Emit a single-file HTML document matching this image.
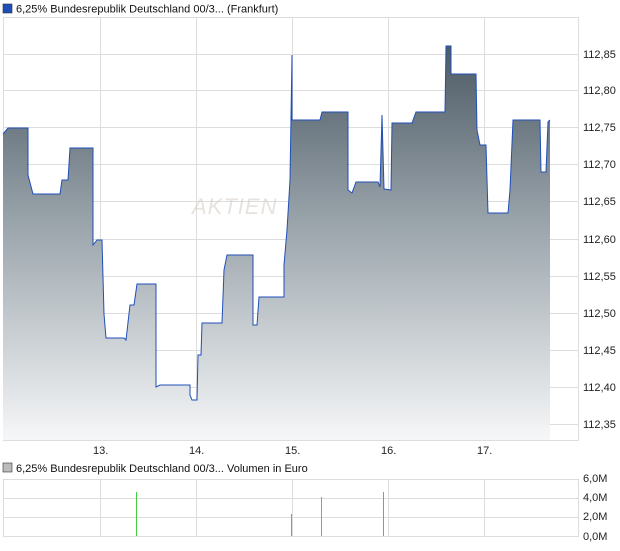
<!DOCTYPE html>
<html><head><meta charset="utf-8"><style>
body{margin:0;background:#fff;width:620px;height:546px;overflow:hidden;font-family:"Liberation Sans",sans-serif;}
</style></head><body>
<svg width="620" height="546" xmlns="http://www.w3.org/2000/svg" font-family="Liberation Sans, sans-serif" font-size="11">
<defs><linearGradient id="g" x1="0" y1="0" x2="0" y2="1">
<stop offset="0" stop-color="#4c5a64"/><stop offset="0.45" stop-color="#9aa4ab"/><stop offset="1" stop-color="#f6f7f8"/></linearGradient></defs>
<rect x="3" y="4" width="9" height="9" fill="#1f4fb8" stroke="#333" stroke-width="0.6"/>
<text x="16" y="12.5" fill="#111">6,25% Bundesrepublik Deutschland 00/3... (Frankfurt)</text>
<g stroke="#ddd" stroke-width="1">
<line x1="3" y1="17.5" x2="578" y2="17.5"/>
<line x1="3" y1="54.5" x2="578" y2="54.5"/><line x1="3" y1="90.5" x2="578" y2="90.5"/><line x1="3" y1="127.5" x2="578" y2="127.5"/><line x1="3" y1="164.5" x2="578" y2="164.5"/><line x1="3" y1="201.5" x2="578" y2="201.5"/><line x1="3" y1="239.5" x2="578" y2="239.5"/><line x1="3" y1="276.5" x2="578" y2="276.5"/><line x1="3" y1="313.5" x2="578" y2="313.5"/><line x1="3" y1="350.5" x2="578" y2="350.5"/><line x1="3" y1="387.5" x2="578" y2="387.5"/><line x1="3" y1="424.5" x2="578" y2="424.5"/>
<line x1="100.5" y1="17" x2="100.5" y2="441"/><line x1="196.5" y1="17" x2="196.5" y2="441"/><line x1="292.5" y1="17" x2="292.5" y2="441"/><line x1="388.5" y1="17" x2="388.5" y2="441"/><line x1="484.5" y1="17" x2="484.5" y2="441"/>
<line x1="3.5" y1="17" x2="3.5" y2="441"/><line x1="578.5" y1="17" x2="578.5" y2="441"/><line x1="3" y1="440.5" x2="578" y2="440.5"/>
</g>
<path d="M3,134 L8,128 L28,128 L28,175 L33,194 L60,194 L62,180 L68,180 L70,148 L93,148 L93,245 L97,240 L102,240 L104,314 L106,338 L124,338 L126,340 L130,305 L134,305 L137,284 L156,284 L156,387 L160,385 L190,385 L190,395 L192,400 L197,400 L198,355 L201,355 L202,323 L222,323 L224,270 L227,255 L253,255 L253,325 L257,325 L259,297 L284,297 L284,265 L287,230 L290,180 L292,55 L292,120 L320,120 L322,112 L348,112 L348,190 L352,193 L356,182 L378,182 L380,187 L382,115 L384,189 L391,190 L392,123 L412,123 L416,112 L445,112 L446,46 L451,46 L451,74 L476,74 L477,130 L480,145 L486,145 L488,213 L508,213 L510,190 L513,120 L540,120 L541,172 L546,172 L548,122 L550,120 L550,440 L3,440 Z" fill="url(#g)"/>
<path d="M3,134 L8,128 L28,128 L28,175 L33,194 L60,194 L62,180 L68,180 L70,148 L93,148 L93,245 L97,240 L102,240 L104,314 L106,338 L124,338 L126,340 L130,305 L134,305 L137,284 L156,284 L156,387 L160,385 L190,385 L190,395 L192,400 L197,400 L198,355 L201,355 L202,323 L222,323 L224,270 L227,255 L253,255 L253,325 L257,325 L259,297 L284,297 L284,265 L287,230 L290,180 L292,55 L292,120 L320,120 L322,112 L348,112 L348,190 L352,193 L356,182 L378,182 L380,187 L382,115 L384,189 L391,190 L392,123 L412,123 L416,112 L445,112 L446,46 L451,46 L451,74 L476,74 L477,130 L480,145 L486,145 L488,213 L508,213 L510,190 L513,120 L540,120 L541,172 L546,172 L548,122 L550,120" fill="none" stroke="#1f4fb8" stroke-width="1"/>
<text x="192" y="214" font-size="22" font-style="italic" fill="#d8d0c8" opacity="0.6" letter-spacing="1">AKTIEN</text>
<g fill="#222">
<text x="583" y="58">112,85</text><text x="583" y="94">112,80</text><text x="583" y="131">112,75</text><text x="583" y="168">112,70</text><text x="583" y="205">112,65</text><text x="583" y="243">112,60</text><text x="583" y="280">112,55</text><text x="583" y="317">112,50</text><text x="583" y="354">112,45</text><text x="583" y="391">112,40</text><text x="583" y="428">112,35</text>
<text x="93" y="454">13.</text><text x="189" y="454">14.</text><text x="285" y="454">15.</text><text x="381" y="454">16.</text><text x="477" y="454">17.</text>
</g>
<rect x="3" y="463" width="9" height="9" fill="#bbb" stroke="#333" stroke-width="0.6"/>
<text x="16" y="472" fill="#111">6,25% Bundesrepublik Deutschland 00/3... Volumen in Euro</text>
<g stroke="#ddd" stroke-width="1">
<line x1="3" y1="479.5" x2="578" y2="479.5"/><line x1="3" y1="498.5" x2="578" y2="498.5"/><line x1="3" y1="517.5" x2="578" y2="517.5"/><line x1="3" y1="536.5" x2="578" y2="536.5"/>
<line x1="3.5" y1="479" x2="3.5" y2="537"/><line x1="578.5" y1="479" x2="578.5" y2="537"/>
<line x1="100.5" y1="479" x2="100.5" y2="537"/><line x1="196.5" y1="479" x2="196.5" y2="537"/><line x1="292.5" y1="479" x2="292.5" y2="537"/><line x1="388.5" y1="479" x2="388.5" y2="537"/><line x1="484.5" y1="479" x2="484.5" y2="537"/>
</g>
<g stroke-width="1">
<line x1="136.5" y1="492" x2="136.5" y2="536" stroke="#4c4"/>
<line x1="291.5" y1="514" x2="291.5" y2="536" stroke="#4c4"/>
<line x1="321.5" y1="497" x2="321.5" y2="536" stroke="#999"/>
<line x1="383.5" y1="492" x2="383.5" y2="536" stroke="#4c4"/>
</g>
<g fill="#222"><text x="583" y="482">6,0M</text><text x="583" y="501">4,0M</text><text x="583" y="520">2,0M</text><text x="583" y="540">0,0M</text></g>
</svg>
</body></html>
